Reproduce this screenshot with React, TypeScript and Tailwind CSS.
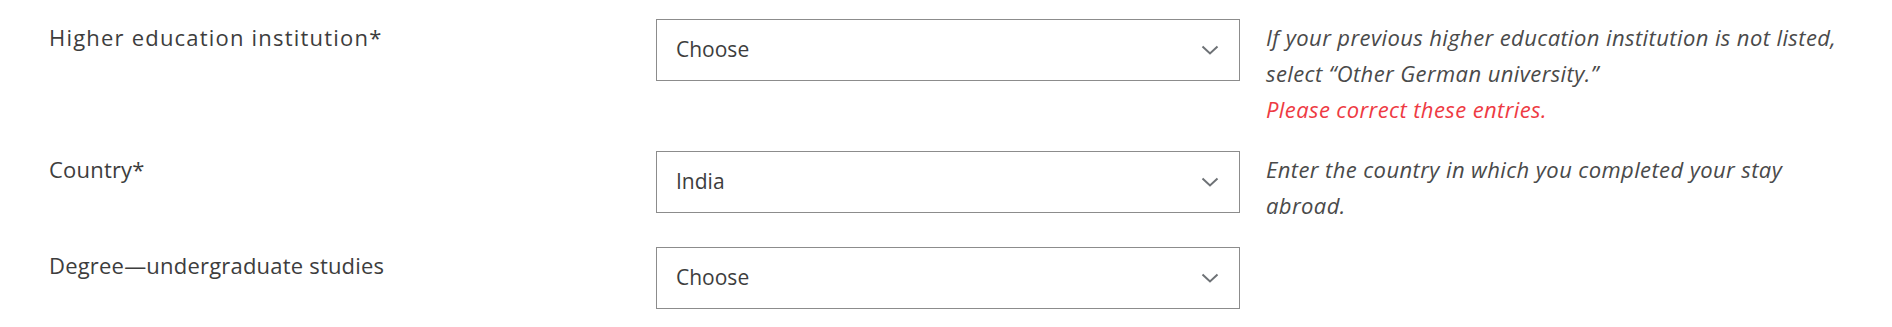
import { ReactNode } from 'react'

interface FieldRowProps {
  label: string
  value: string
  hint?: ReactNode
  tracking?: string
}

function Chevron() {
  return (
    <svg width="18" height="10" viewBox="0 0 18 10" fill="none" className="text-[#6e7276]">
      <path d="M1.5 1.5 L9 8.5 L16.5 1.5" stroke="currentColor" strokeWidth="2" />
    </svg>
  )
}

function FieldRow({ label, value, hint, tracking = 'tracking-[0.2px]' }: FieldRowProps) {
  return (
    <div className="flex items-start">
      <div className={`w-[656px] pl-[49px] text-[22px] leading-[36px] text-[#3d3d3d] shrink-0 ${tracking}`}>{label}</div>
      <div className="w-[584px] h-[62px] border border-[#8c8c8c] flex items-center justify-between pl-[19px] pr-[20px] shrink-0">
        <span className="text-[21px] text-[#3d3d3d]">{value}</span>
        <Chevron />
      </div>
      <div className="pl-[26px] w-[652px] text-[22px] leading-[36px] tracking-[0.4px] italic text-[#4a4a4a]">{hint}</div>
    </div>
  )
}

export default function App() {
  return (
    <div className="w-[1892px] h-[327px] bg-white pt-[19px] flex flex-col gap-[24px] font-['Open_Sans',sans-serif]">
      <FieldRow
        label="Higher education institution*"
        value="Choose"
        tracking="tracking-[1.2px]"
        hint={
          <>
            <div>If your previous higher education institution is not listed,</div>
            <div>select “Other German university.”</div>
            <div className="text-[#ee3a43]">Please correct these entries.</div>
          </>
        }
      />
      <FieldRow
        label="Country*"
        value="India"
        hint={
          <>
            <div>Enter the country in which you completed your stay</div>
            <div>abroad.</div>
          </>
        }
      />
      <FieldRow label="Degree—undergraduate studies" value="Choose" />
    </div>
  )
}
